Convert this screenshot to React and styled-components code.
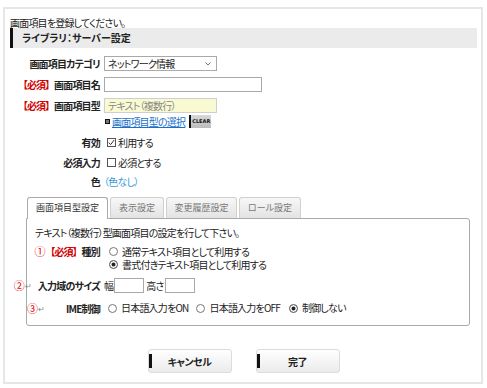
import React from 'react';
import styled, { createGlobalStyle } from 'styled-components';

const GlobalStyle = createGlobalStyle`
  html, body {
    margin: 0;
    padding: 0;
    background: #fff;
  }
  body {
    font-family: "Noto Sans CJK JP", "Noto Sans", sans-serif;
    font-size: 10px;
    line-height: 13px;
    letter-spacing: -0.8px;
    color: #222;
    font-feature-settings: "palt";
  }
  * {
    box-sizing: border-box;
  }
`;

const Panel = styled.div`
  margin: 7px 0 0 3px;
  width: 480px;
  height: 377px;
  border: 2px solid #e6e6e6;
  padding: 8px 4px 0 5px;
`;

const Intro = styled.p`
  margin: 0;
  line-height: 11px;
`;

const Heading = styled.h2`
  margin: 0;
  height: 20px;
  line-height: 20px;
  background: #ebebeb;
  border-left: 3px solid #111;
  padding-left: 9px;
  font-size: 10px;
  font-weight: bold;
  letter-spacing: 0;
`;

const Form = styled.div`
  display: flex;
  flex-direction: column;
`;

const Row = styled.div`
  display: grid;
  grid-template-columns: 90px 1fr;
  column-gap: 4px;
  align-items: center;
  height: ${(p) => p.$h}px;
  margin-top: ${(p) => p.$mt || 0}px;
`;

const Label = styled.div`
  text-align: right;
  font-weight: bold;
  white-space: nowrap;
`;

const Required = styled.span`
  color: #d00000;
  font-weight: bold;
  font-feature-settings: normal;
  letter-spacing: -1px;
`;

const Field = styled.div`
  display: flex;
  align-items: center;
  white-space: nowrap;
`;

const Box = styled.div`
  position: relative;
  display: flex;
  align-items: center;
  width: ${(p) => p.$w}px;
  height: 15px;
  padding: 0 3px;
  border: 1px solid ${(p) => (p.$readonly ? '#cfcfcf' : '#a9a9a9')};
  background: ${(p) => (p.$readonly ? '#fafad2' : '#fff')};
  color: ${(p) => (p.$readonly ? '#888' : '#222')};
  font-size: 10px;
`;

const Chevron = styled.svg`
  position: absolute;
  right: 5px;
  top: 5px;
`;

const Bullet = styled.span`
  display: inline-block;
  width: 5px;
  height: 5px;
  margin: 0 2px 0 1px;
  border: 1px solid #111;
  background: #777;
`;

const Link = styled.a`
  color: #1a6fc9;
  text-decoration: underline;
  cursor: pointer;
`;

const ClearButton = styled.span`
  display: inline-flex;
  align-items: center;
  justify-content: center;
  width: 22px;
  height: 13px;
  margin-left: 4px;
  border-left: 2px solid #111;
  background: linear-gradient(#d8d8d8, #bcbcbc);
  font-family: "DejaVu Sans", sans-serif;
  font-size: 5px;
  font-weight: bold;
  letter-spacing: 0;
  color: #111;
`;

const CheckBox = styled.span`
  display: inline-flex;
  align-items: center;
  justify-content: center;
  width: 9px;
  height: 9px;
  margin: 0 2px 0 3px;
  border: 1px solid #555;
  background: #fff;
`;

const Muted = styled.span`
  color: #3a9ad9;
`;

const TabArea = styled.div`
  margin: 7px 7px 0 16px;
`;

const TabBar = styled.div`
  display: flex;
  align-items: flex-start;
  gap: 2px;
  height: 21px;
  padding-left: 1px;
`;

const Tab = styled.div`
  position: relative;
  z-index: ${(p) => (p.$active ? 1 : 0)};
  width: ${(p) => p.$w}px;
  height: ${(p) => (p.$active ? 22 : 21)}px;
  line-height: 20px;
  text-align: center;
  font-size: 9px;
  letter-spacing: 0;
  white-space: nowrap;
  border: 1px solid ${(p) => (p.$active ? '#aaa' : '#d0d0d0')};
  border-bottom: none;
  border-radius: 3px 3px 0 0;
  background: ${(p) => (p.$active ? '#fff' : 'linear-gradient(#f7f7f7, #e3e3e3)')};
  color: ${(p) => (p.$active ? '#333' : '#777')};
`;

const TabBody = styled.div`
  height: 108px;
  padding: 8px 8px 0;
  border: 1px solid #aaa;
  border-radius: 0 3px 3px 3px;
`;

const BodyIntro = styled.p`
  margin: 0;
  line-height: 12px;
`;

const SubRow = styled.div`
  display: grid;
  grid-template-columns: 73px 1fr;
  column-gap: 4px;
  align-items: ${(p) => (p.$top ? 'start' : 'center')};
  height: ${(p) => p.$h}px;
  margin: ${(p) => p.$mt}px 0 0 -8px;
`;

const MarkedLabel = styled.div`
  display: flex;
  align-items: center;
  justify-content: ${(p) => (p.$spread ? 'space-between' : 'flex-end')};
  height: 13px;
  font-weight: bold;
  white-space: nowrap;
`;

const Marker = styled.span`
  display: inline-flex;
  align-items: center;
  margin-right: ${(p) => p.$mr || 0}px;
  color: #e60000;
  font-weight: normal;
  font-size: 11px;
  letter-spacing: 0;
`;

const Return = styled.span`
  color: #888;
  font-size: 8px;
`;

const Options = styled.div`
  display: flex;
  flex-direction: ${(p) => (p.$column ? 'column' : 'row')};
`;

const Option = styled.label`
  display: flex;
  align-items: center;
  height: 13px;
  line-height: 12px;
  white-space: nowrap;
`;

const Radio = styled.span`
  display: inline-block;
  flex: none;
  width: 9px;
  height: 9px;
  margin: 0 4px 0 ${(p) => p.$ml}px;
  border-radius: 50%;
  border: 1px solid #777;
  background: ${(p) => (p.$on ? '#222' : '#fff')};
  box-shadow: ${(p) => (p.$on ? 'inset 0 0 0 1.5px #fff' : 'none')};
`;

const SizeInput = styled.span`
  display: inline-block;
  width: 30px;
  height: 15px;
  margin: 0 2px 0 1px;
  border: 1px solid #a9a9a9;
  background: #fff;
`;

const Buttons = styled.div`
  display: flex;
  justify-content: center;
  gap: 24px;
  margin-top: 23px;
`;

const Button = styled.button`
  position: relative;
  width: 84px;
  height: 24px;
  border: 1px solid #dcdcdc;
  border-radius: 3px;
  background: linear-gradient(#ffffff, #ebebeb);
  font-family: inherit;
  font-feature-settings: "palt";
  font-size: 10px;
  font-weight: bold;
  letter-spacing: -0.5px;
  color: #222;
  &::before {
    content: '';
    position: absolute;
    left: 0;
    top: 4px;
    bottom: 4px;
    width: 3px;
    background: #111;
  }
`;

const tabs = [
  { label: '画面項目型設定', w: 81 },
  { label: '表示設定', w: 54 },
  { label: '変更履歴設定', w: 71 },
  { label: 'ロール設定', w: 62 },
];

const imeOptions = [
  { label: '日本語入力をON', on: false, ml: 4 },
  { label: '日本語入力をOFF', on: false, ml: 8 },
  { label: '制御しない', on: true, ml: 9 },
];

export default function App() {
  return (
    <>
      <GlobalStyle />
      <Panel>
        <Intro>画面項目を登録してください。</Intro>
        <Heading>ライブラリ：サーバー設定</Heading>

        <Form>
          <Row $h={15} $mt={8}>
            <Label>画面項目カテゴリ</Label>
            <Field>
              <Box $w={113}>
                ネットワーク情報
                <Chevron width="6" height="4" viewBox="0 0 6 4">
                  <polyline points="0.5,0.5 3,3 5.5,0.5" fill="none" stroke="#666" strokeWidth="0.9" />
                </Chevron>
              </Box>
            </Field>
          </Row>
          <Row $h={15} $mt={6}>
            <Label>
              <Required>【必須】</Required>画面項目名
            </Label>
            <Field>
              <Box $w={158} />
            </Field>
          </Row>
          <Row $h={15} $mt={6}>
            <Label>
              <Required>【必須】</Required>画面項目型
            </Label>
            <Field>
              <Box $w={113} $readonly>
                テキスト（複数行）
              </Box>
            </Field>
          </Row>
          <Row $h={14} $mt={1}>
            <span />
            <Field>
              <Bullet />
              <Link>画面項目型の選択</Link>
              <ClearButton>CLEAR</ClearButton>
            </Field>
          </Row>
          <Row $h={20} $mt={4}>
            <Label>有効</Label>
            <Field>
              <CheckBox>
                <svg width="7" height="7" viewBox="0 0 7 7">
                  <polyline points="0.8,3.6 2.6,5.6 6.2,1" fill="none" stroke="#333" strokeWidth="1" />
                </svg>
              </CheckBox>
              利用する
            </Field>
          </Row>
          <Row $h={20}>
            <Label>必須入力</Label>
            <Field>
              <CheckBox />
              必須とする
            </Field>
          </Row>
          <Row $h={18}>
            <Label>色</Label>
            <Field>
              <Muted>（色なし）</Muted>
            </Field>
          </Row>
        </Form>

        <TabArea>
          <TabBar>
            {tabs.map((t, i) => (
              <Tab key={t.label} $w={t.w} $active={i === 0}>
                {t.label}
              </Tab>
            ))}
          </TabBar>
          <TabBody>
            <BodyIntro>テキスト（複数行）型画面項目の設定を行して下さい。</BodyIntro>

            <SubRow $h={26} $mt={6} $top>
              <MarkedLabel>
                <Marker>①</Marker>
                <Required>【必須】</Required>種別
              </MarkedLabel>
              <Options $column>
                <Option>
                  <Radio $ml={5} />
                  通常テキスト項目として利用する
                </Option>
                <Option>
                  <Radio $ml={5} $on />
                  書式付きテキスト項目として利用する
                </Option>
              </Options>
            </SubRow>

            <SubRow $h={15} $mt={7}>
              <MarkedLabel>
                <Marker $mr={6}>
                  ②<Return>↵</Return>
                </Marker>
                入力域のサイズ
              </MarkedLabel>
              <Field>
                幅<SizeInput />
                高さ<SizeInput />
              </Field>
            </SubRow>

            <SubRow $h={16} $mt={7}>
              <MarkedLabel $spread>
                <Marker>
                  ③<Return>↵</Return>
                </Marker>
                IME制御
              </MarkedLabel>
              <Options>
                {imeOptions.map((o) => (
                  <Option key={o.label}>
                    <Radio $ml={o.ml} $on={o.on} />
                    {o.label}
                  </Option>
                ))}
              </Options>
            </SubRow>
          </TabBody>
        </TabArea>

        <Buttons>
          <Button>キャンセル</Button>
          <Button>完了</Button>
        </Buttons>
      </Panel>
    </>
  );
}
